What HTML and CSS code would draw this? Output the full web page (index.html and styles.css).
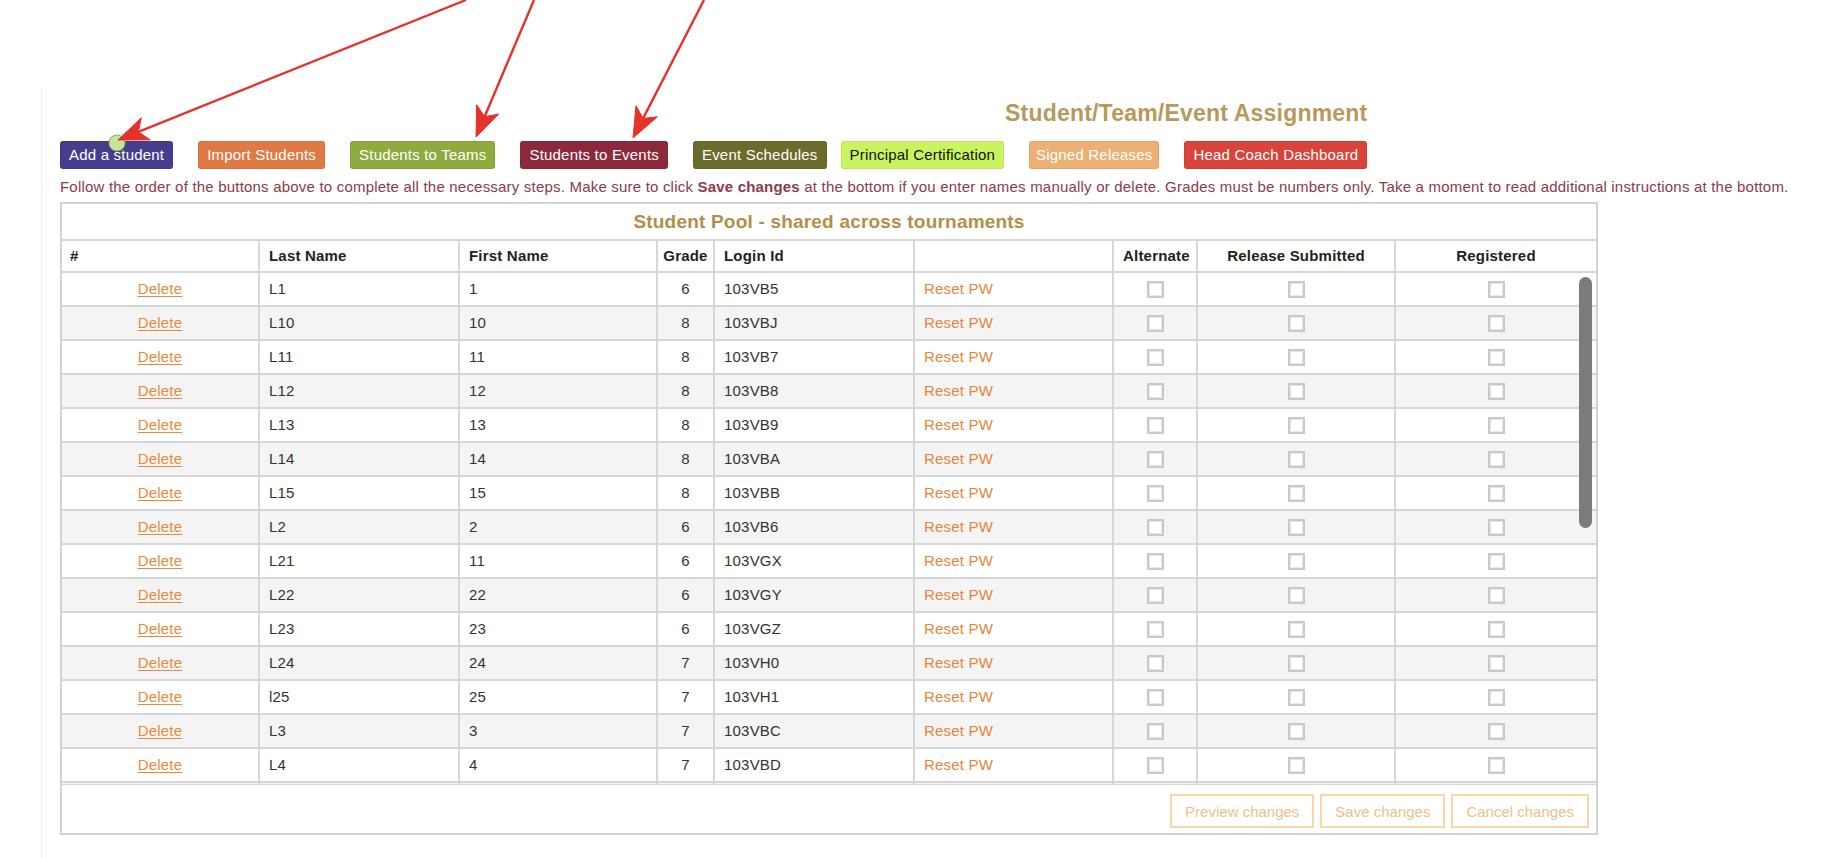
FILE: index.html
```html
<!DOCTYPE html>
<html lang="en">
<head>
<meta charset="utf-8">
<title>Student/Team/Event Assignment</title>
<link rel="stylesheet" href="styles.css">
</head>
<body>
<svg class="annot" width="1828" height="200" viewBox="0 0 1828 200" aria-hidden="true">
  <circle cx="117" cy="143" r="8" fill="#c4e69b" stroke="#86b35c" stroke-width="1"/>
  <g fill="#e5322b" stroke="#e5322b">
    <line x1="466" y1="0" x2="138.4" y2="131.8" stroke-width="2.4"/>
    <polygon points="118,140 150.3,139.9 138.4,131.8 141.3,117.7" stroke-width="1"/>
    <line x1="534" y1="0" x2="484.6" y2="116.7" stroke-width="2.4"/>
    <polygon points="476,137 498.7,114.1 484.6,116.7 476.6,104.7" stroke-width="1"/>
    <line x1="704" y1="0" x2="643.1" y2="118.4" stroke-width="2.4"/>
    <polygon points="633,138 657.4,116.8 643.1,118.4 636.0,105.8" stroke-width="1"/>
  </g>
</svg>

<div class="panel">
  <div class="top">
    <h1 class="title">Student/Team/Event Assignment</h1>
    <div class="toolbar">
      <button class="btn b-add">Add a student</button>
      <button class="btn b-import">Import Students</button>
      <button class="btn b-teams">Students to Teams</button>
      <button class="btn b-events">Students to Events</button>
      <button class="btn b-sched">Event Schedules</button>
      <button class="btn b-cert">Principal Certification</button>
      <button class="btn b-signed">Signed Releases</button>
      <button class="btn b-head">Head Coach Dashboard</button>
    </div>
  </div>
  <p class="note">Follow the order of the buttons above to complete all the necessary steps. Make sure to click <b>Save changes</b> at the bottom if you enter names manually or delete. Grades must be numbers only. Take a moment to read additional instructions at the bottom.</p>

  <div class="pool">
    <div class="pool-title">Student Pool - shared across tournaments</div>
    <table class="grid head">
      <colgroup><col class="w1"><col class="w2"><col class="w3"><col class="w4"><col class="w5"><col class="w6"><col class="w7"><col class="w8"><col class="w9"></colgroup>
      <thead>
        <tr><th>#</th><th>Last Name</th><th>First Name</th><th class="c g">Grade</th><th>Login Id</th><th></th><th class="c">Alternate</th><th class="c">Release Submitted</th><th class="c">Registered</th></tr>
      </thead>
    </table>
    <div class="pool-body">
      <table class="grid body">
        <colgroup><col class="w1"><col class="w2"><col class="w3"><col class="w4"><col class="w5"><col class="w6"><col class="w7"><col class="w8"><col class="w9"></colgroup>
        <tbody>
          <tr><td class="c"><a class="del" href="#">Delete</a></td><td>L1</td><td>1</td><td class="c">6</td><td class="id">103VB5</td><td><a class="reset" href="#">Reset PW</a></td><td class="c"><input type="checkbox"></td><td class="c"><input type="checkbox"></td><td class="c"><input type="checkbox"></td></tr>
          <tr><td class="c"><a class="del" href="#">Delete</a></td><td>L10</td><td>10</td><td class="c">8</td><td class="id">103VBJ</td><td><a class="reset" href="#">Reset PW</a></td><td class="c"><input type="checkbox"></td><td class="c"><input type="checkbox"></td><td class="c"><input type="checkbox"></td></tr>
          <tr><td class="c"><a class="del" href="#">Delete</a></td><td>L11</td><td>11</td><td class="c">8</td><td class="id">103VB7</td><td><a class="reset" href="#">Reset PW</a></td><td class="c"><input type="checkbox"></td><td class="c"><input type="checkbox"></td><td class="c"><input type="checkbox"></td></tr>
          <tr><td class="c"><a class="del" href="#">Delete</a></td><td>L12</td><td>12</td><td class="c">8</td><td class="id">103VB8</td><td><a class="reset" href="#">Reset PW</a></td><td class="c"><input type="checkbox"></td><td class="c"><input type="checkbox"></td><td class="c"><input type="checkbox"></td></tr>
          <tr><td class="c"><a class="del" href="#">Delete</a></td><td>L13</td><td>13</td><td class="c">8</td><td class="id">103VB9</td><td><a class="reset" href="#">Reset PW</a></td><td class="c"><input type="checkbox"></td><td class="c"><input type="checkbox"></td><td class="c"><input type="checkbox"></td></tr>
          <tr><td class="c"><a class="del" href="#">Delete</a></td><td>L14</td><td>14</td><td class="c">8</td><td class="id">103VBA</td><td><a class="reset" href="#">Reset PW</a></td><td class="c"><input type="checkbox"></td><td class="c"><input type="checkbox"></td><td class="c"><input type="checkbox"></td></tr>
          <tr><td class="c"><a class="del" href="#">Delete</a></td><td>L15</td><td>15</td><td class="c">8</td><td class="id">103VBB</td><td><a class="reset" href="#">Reset PW</a></td><td class="c"><input type="checkbox"></td><td class="c"><input type="checkbox"></td><td class="c"><input type="checkbox"></td></tr>
          <tr><td class="c"><a class="del" href="#">Delete</a></td><td>L2</td><td>2</td><td class="c">6</td><td class="id">103VB6</td><td><a class="reset" href="#">Reset PW</a></td><td class="c"><input type="checkbox"></td><td class="c"><input type="checkbox"></td><td class="c"><input type="checkbox"></td></tr>
          <tr><td class="c"><a class="del" href="#">Delete</a></td><td>L21</td><td>11</td><td class="c">6</td><td class="id">103VGX</td><td><a class="reset" href="#">Reset PW</a></td><td class="c"><input type="checkbox"></td><td class="c"><input type="checkbox"></td><td class="c"><input type="checkbox"></td></tr>
          <tr><td class="c"><a class="del" href="#">Delete</a></td><td>L22</td><td>22</td><td class="c">6</td><td class="id">103VGY</td><td><a class="reset" href="#">Reset PW</a></td><td class="c"><input type="checkbox"></td><td class="c"><input type="checkbox"></td><td class="c"><input type="checkbox"></td></tr>
          <tr><td class="c"><a class="del" href="#">Delete</a></td><td>L23</td><td>23</td><td class="c">6</td><td class="id">103VGZ</td><td><a class="reset" href="#">Reset PW</a></td><td class="c"><input type="checkbox"></td><td class="c"><input type="checkbox"></td><td class="c"><input type="checkbox"></td></tr>
          <tr><td class="c"><a class="del" href="#">Delete</a></td><td>L24</td><td>24</td><td class="c">7</td><td class="id">103VH0</td><td><a class="reset" href="#">Reset PW</a></td><td class="c"><input type="checkbox"></td><td class="c"><input type="checkbox"></td><td class="c"><input type="checkbox"></td></tr>
          <tr><td class="c"><a class="del" href="#">Delete</a></td><td>l25</td><td>25</td><td class="c">7</td><td class="id">103VH1</td><td><a class="reset" href="#">Reset PW</a></td><td class="c"><input type="checkbox"></td><td class="c"><input type="checkbox"></td><td class="c"><input type="checkbox"></td></tr>
          <tr><td class="c"><a class="del" href="#">Delete</a></td><td>L3</td><td>3</td><td class="c">7</td><td class="id">103VBC</td><td><a class="reset" href="#">Reset PW</a></td><td class="c"><input type="checkbox"></td><td class="c"><input type="checkbox"></td><td class="c"><input type="checkbox"></td></tr>
          <tr><td class="c"><a class="del" href="#">Delete</a></td><td>L4</td><td>4</td><td class="c">7</td><td class="id">103VBD</td><td><a class="reset" href="#">Reset PW</a></td><td class="c"><input type="checkbox"></td><td class="c"><input type="checkbox"></td><td class="c"><input type="checkbox"></td></tr>
          <tr><td class="c"><a class="del" href="#">Delete</a></td><td>L5</td><td>5</td><td class="c">7</td><td class="id">103VBE</td><td><a class="reset" href="#">Reset PW</a></td><td class="c"><input type="checkbox"></td><td class="c"><input type="checkbox"></td><td class="c"><input type="checkbox"></td></tr>
        </tbody>
      </table>
    </div>
    <div class="pool-foot">
      <button class="fbtn">Preview changes</button>
      <button class="fbtn">Save changes</button>
      <button class="fbtn">Cancel changes</button>
    </div>
    <div class="thumb"></div>
  </div>
</div>
</body>
</html>
```

FILE: styles.css
```css
* { box-sizing: border-box; }

body {
  margin: 0;
  font-family: "Liberation Sans", Arial, Helvetica, sans-serif;
  letter-spacing: 0.2px;
  color: #333;
  background: #fff;
}

.annot {
  position: absolute;
  left: 0;
  top: 0;
  z-index: 5;
  pointer-events: none;
}

.panel {
  margin: 88px 0 0 41px;
  border-left: 1px solid #ededed;
  padding: 11px 0 40px 18px;
}

.top {
  width: max-content;
}

.title {
  margin: 0;
  text-align: right;
  font-size: 23px;
  line-height: 28px;
  font-weight: bold;
  color: #b9985c;
}

.toolbar {
  display: flex;
  gap: 25px;
  margin-top: 14px;
}

.btn {
  height: 28px;
  padding: 0 8px;
  border: 1px solid rgba(0,0,0,0.06);
  border-radius: 3px;
  font-family: inherit;
  font-size: 15px;
  letter-spacing: 0.2px;
  line-height: 26px;
  color: #fff;
  cursor: pointer;
}
.b-add { background: #453e8f; }
.b-import { background: #e07a45; }
.b-teams { background: #8faa3e; }
.b-events { background: #8c293c; }
.b-sched { background: #6b6b2b; margin-right: -11px; }
.b-cert { background: #caf45f; color: #111; }
.b-signed { background: #ecb075; padding: 0 6px; }
.b-head { background: #d8443a; }

.note {
  margin: 9px 0 0;
  font-size: 15px;
  line-height: 18px;
  color: #8d3a49;
  white-space: nowrap;
}

.pool {
  position: relative;
  margin-top: 6px;
  width: 1538px;
  border: 1px solid #cfcfcf;
}

.pool-title {
  height: 37px;
  border: 1px solid #d6d6d6;
  text-align: center;
  font-size: 19px;
  font-weight: bold;
  line-height: 35px;
  color: #b48e49;
}

.grid {
  width: 1536px;
  table-layout: fixed;
  border-collapse: separate;
  border-spacing: 0;
  font-size: 15px;
}

.w1 { width: 198px; }
.w2 { width: 200px; }
.w3 { width: 198px; }
.w4 { width: 57px; }
.w5 { width: 200px; }
.w6 { width: 199px; }
.w7 { width: 84px; }
.w8 { width: 198px; }
.w9 { width: 202px; }

.grid th,
.grid td {
  border: 1px solid #d6d6d6;
  padding: 0 9px;
  white-space: nowrap;
  overflow: hidden;
  text-align: left;
}

.grid th {
  font-weight: bold;
  color: #222;
  line-height: 30px;
}
.grid th:first-child { padding-left: 8px; }
.grid th.g { padding: 0 2px; }

.grid td {
  line-height: 32px;
  color: #333;
}

.grid .c { text-align: center; }

.body tr:nth-child(even) td { background: #f4f4f4; }

.id { color: #2e2e45; }

.del {
  color: #e98a3b;
  text-decoration: underline;
  text-underline-offset: 2px;
}

.reset {
  color: #e8843b;
  text-decoration: none;
}

.grid input[type="checkbox"] {
  appearance: none;
  -webkit-appearance: none;
  width: 17px;
  height: 17px;
  margin: 0;
  vertical-align: middle;
  border: 2px solid #c9c9c9;
  box-shadow: inset 0 0 0 1px #e8e8e8;
  background: #fff;
  position: relative;
  top: -1px;
}

.pool-body {
  height: 512px;
  overflow-y: auto;
  scrollbar-width: none;
}
.pool-body::-webkit-scrollbar { display: none; }

.pool-foot {
  display: flex;
  justify-content: flex-end;
  gap: 6px;
  border: 1px solid #d6d6d6;
  padding: 9px 7px 5px;
}

.fbtn {
  height: 34px;
  padding: 0 13px;
  background: #fff;
  border: 2px solid #f6d7a8;
  font-family: inherit;
  font-size: 15px;
  letter-spacing: 0;
  color: #f0bf88;
  cursor: pointer;
}

.thumb {
  position: absolute;
  top: 74px;
  right: 5px;
  width: 13px;
  height: 251px;
  border-radius: 7px;
  background: #7b7b7b;
}
```
